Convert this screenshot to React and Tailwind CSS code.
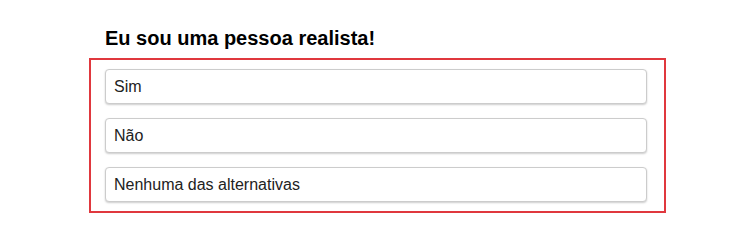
import React from "react";

const options = ["Sim", "Não", "Nenhuma das alternativas"];

const App = () => {
  return (
    <div className="min-h-[251px] bg-white font-['Liberation_Sans',Arial,sans-serif] text-[#222]">
      <div className="ml-[89px] w-[577px] pt-[26px]">
        {/* question title */}
        <h2 className="pl-[16px] text-[20px] font-bold leading-[24px] text-black">
          Eu sou uma pessoa realista!
        </h2>
        {/* answers */}
        <div className="mt-[8px] flex flex-col gap-[14px] border-2 border-[#e0383e] pt-[9px] pb-[9px] pl-[14px] pr-[17px]">
          {options.map((item, index) => (
            <div
              key={index}
              className="flex h-[35px] items-center rounded-[4px] border border-[#cccccc] bg-white px-[8px] text-[16px] text-[#222] shadow-[0_1px_2px_rgba(0,0,0,0.2)]"
            >
              {item}
            </div>
          ))}
        </div>
      </div>
    </div>
  );
};

export default App;
